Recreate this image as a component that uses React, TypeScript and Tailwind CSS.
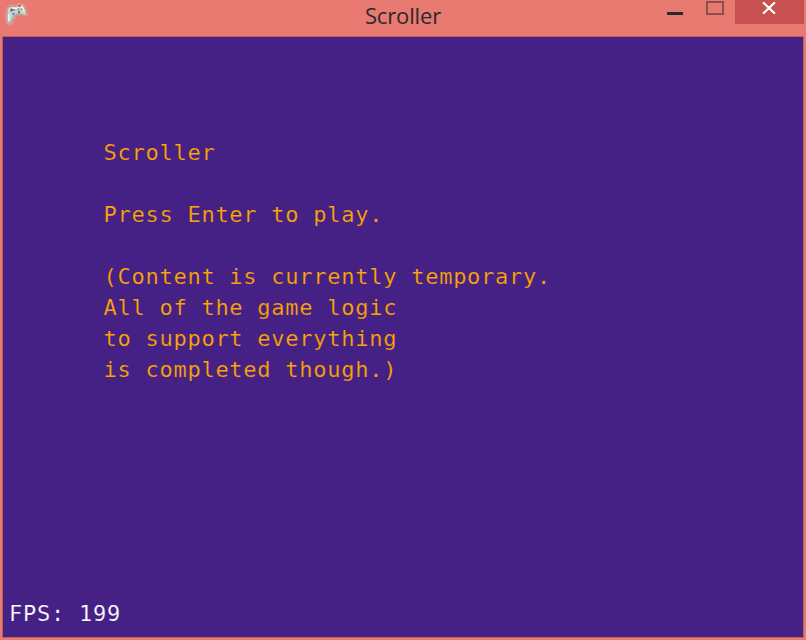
const menuLines = [
  'Scroller',
  '',
  'Press Enter to play.',
  '',
  '(Content is currently temporary.',
  'All of the game logic',
  'to support everything',
  'is completed though.)',
];

function GamepadIcon() {
  return (
    <svg className="ml-[5px] mt-[1px] h-[26px] w-[25px] shrink-0" viewBox="0 0 25 26" fill="none">
      <path d="M1 7 5 3.5 11 4 14 2 19 3 21 6 23 13 22 16 19 15 15 14 11 16 8 23 5 25 1 23 0 15Z" fill="#f2a39d" opacity=".6" />
      <path d="M2.5 8 5 5.5 10 5.5 13 4.5 15 3.5 18.5 5 21.5 12 21 14.5 18 13.8 15 12.5 10.5 15 7 21 4 23.5 2 21 2 14Z" fill="#ccd0d0" stroke="#929696" strokeWidth=".6" />
      <path d="M4 9 7 7 12 7.5 17 5.5 19.5 11M4 13 3.8 20" stroke="#eef2f1" strokeWidth="1.6" />
      <path d="M3.5 22 6 20.5 9 15 14 12.5" stroke="#8a8e8e" strokeWidth=".8" />
      <circle cx="6.5" cy="9" r="1.4" fill="#4c6470" />
      <circle cx="8.5" cy="13" r="1.3" fill="#7c898c" />
      <circle cx="14" cy="11" r="1.2" fill="#74797b" />
      <path d="M8 8h2v2H8Z" fill="#8fa060" />
      <path d="M12.5 7.5h1.6v1.6h-1.6Z" fill="#4a7d9c" />
      <path d="M13 4h3v2h-3Z" fill="#d66b48" />
      <path d="M15.5 7.5h2v1.5h-2Z" fill="#a9ac47" />
    </svg>
  );
}

function TitleBar() {
  return (
    <header className="grid h-[36px] grid-cols-[200px_1fr_200px]">
      <GamepadIcon />
      <h1 className="pt-[1px] text-center font-['Open_Sans',sans-serif] text-[22px] leading-[29px] tracking-[-0.15px] text-[#2c292c]">
        Scroller
      </h1>
      <div className="flex justify-end pr-[2px]">
        <button aria-label="Minimize" className="flex h-6 w-8 pt-[12px]">
          <span className="h-[3px] w-4 bg-[#2c292c]" />
        </button>
        <button aria-label="Maximize" className="flex h-6 w-9 pl-[7px] pt-[1px]">
          <span className="h-[14px] w-[18px] shrink-0 border-2 border-[#8b504d]" />
        </button>
        <button aria-label="Close" className="flex h-6 w-[69px] shrink-0 bg-[#c75050] pl-[27px] pt-[2px]">
          <svg className="h-3 w-[14px]" viewBox="0 0 14 12">
            <path d="M1 .3 13 11.7M13 .3 1 11.7" stroke="white" strokeWidth="2.2" />
          </svg>
        </button>
      </div>
    </header>
  );
}

export default function App() {
  return (
    <div className="flex h-[640px] w-[806px] flex-col overflow-hidden bg-[#e87a72]">
      <TitleBar />
      <main className="ml-[2px] mr-[2px] flex h-[602px] flex-col justify-between border border-[#bd625b] bg-[#452186] font-['DejaVu_Sans_Mono',monospace] text-[22px] leading-[31px] tracking-[0.74px]">
        <div className="ml-[100.5px] mt-[100px] whitespace-pre text-[#ffa500] [-webkit-text-stroke:0.2px_#452186]">
          {menuLines.map((line, index) => (
            <p key={index} className="h-[31px]">{line}</p>
          ))}
        </div>
        <p className="mb-[8px] ml-[6px] text-white [-webkit-text-stroke:0.2px_#452186]">FPS: 199</p>
      </main>
    </div>
  );
}
